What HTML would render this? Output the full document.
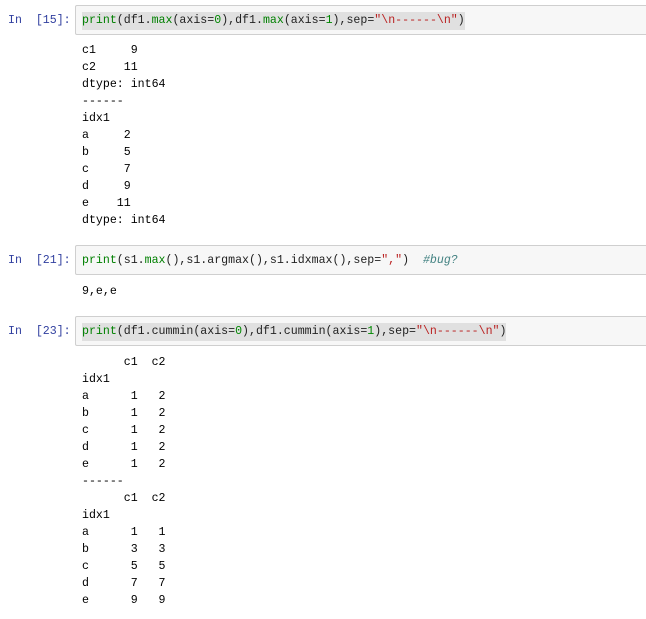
<!DOCTYPE html>
<html><head><meta charset="utf-8"><style>
body{margin:0;width:646px;height:619px;background:#fff;overflow:hidden;position:relative;font-family:"Liberation Mono",monospace;font-size:11.6px;}
.p{position:absolute;left:8px;color:#303F9F;white-space:pre;line-height:17px;}
.box{position:absolute;left:75px;width:580px;height:28px;background:#f7f7f7;border:1px solid #cfcfcf;border-radius:2px;}
.code{position:absolute;left:82px;white-space:pre;line-height:17px;color:#222;}
.hl{background:#e0e0e0;padding:2px 0 3px;}
.k{color:#008000}.s{color:#BA2121}.c{color:#408080;font-style:italic}.num{color:#080}
.out{position:absolute;left:82px;white-space:pre;line-height:17px;color:#000;}
</style></head><body>
<div class="box" style="top:5px"></div>
<div class="p" style="top:12px">In  [15]:</div>
<div class="code" style="top:12px"><span class="hl"><span class="k">print</span>(df1.<span class="k">max</span>(axis=<span class="num">0</span>),df1.<span class="k">max</span>(axis=<span class="num">1</span>),sep=<span class="s">"\n------\n"</span>)</span></div>
<div class="out" style="top:42px">c1     9
c2    11
dtype: int64
------
idx1
a     2
b     5
c     7
d     9
e    11
dtype: int64</div>
<div class="box" style="top:245px"></div>
<div class="p" style="top:252px">In  [21]:</div>
<div class="code" style="top:252px"><span class="k">print</span>(s1.<span class="k">max</span>(),s1.argmax(),s1.idxmax(),sep=<span class="s">","</span>)  <span class="c">#bug?</span></div>
<div class="out" style="top:283px">9,e,e</div>
<div class="box" style="top:316px"></div>
<div class="p" style="top:323px">In  [23]:</div>
<div class="code" style="top:323px"><span class="hl"><span class="k">print</span>(df1.cummin(axis=<span class="num">0</span>),df1.cummin(axis=<span class="num">1</span>),sep=<span class="s">"\n------\n"</span>)</span></div>
<div class="out" style="top:354px">      c1  c2
idx1
a      1   2
b      1   2
c      1   2
d      1   2
e      1   2
------
      c1  c2
idx1
a      1   1
b      3   3
c      5   5
d      7   7
e      9   9</div>
</body></html>
